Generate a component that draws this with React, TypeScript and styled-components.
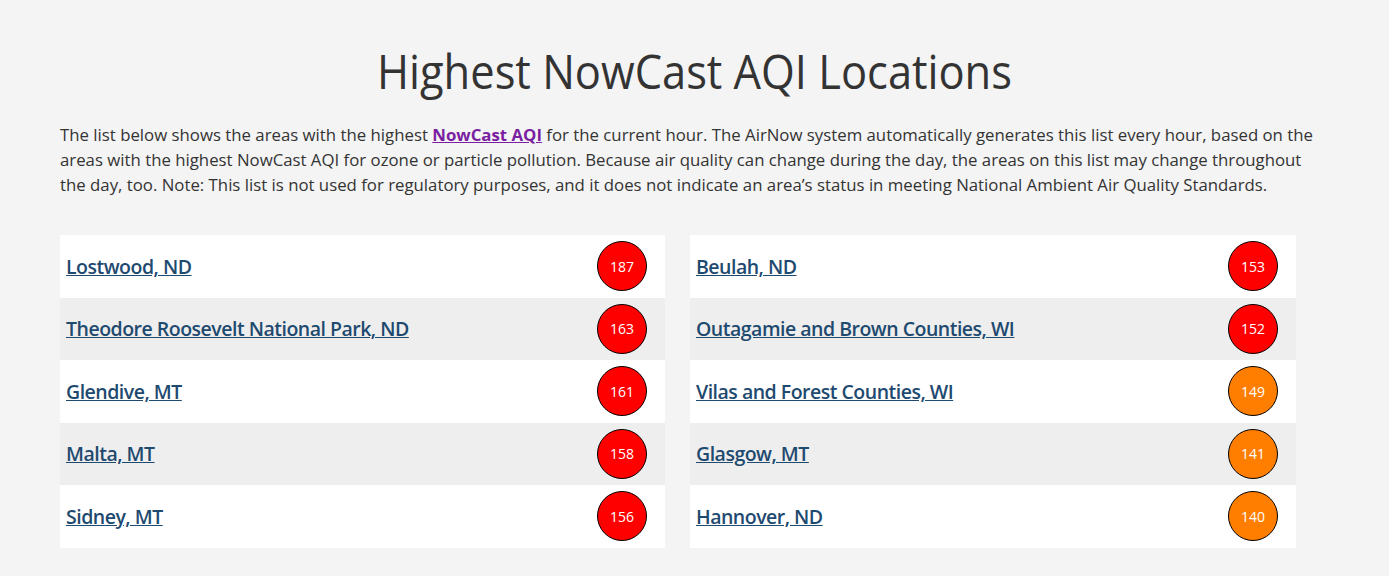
import React from 'react';
import styled, { createGlobalStyle } from 'styled-components';

const GlobalStyle = createGlobalStyle`
    html, body {
        margin: 0;
        padding: 0;
        background: #f4f4f4;
    }
    body {
        font-family: "Open Sans", "Liberation Sans", sans-serif;
        color: #333;
    }
`

const Page = styled.div`
    padding: 0 60px 29px;
`

const Title = styled.h1`
    margin: 0;
    padding-top: 42px;
    font-size: 48px;
    font-weight: 400;
    line-height: 58px;
    text-align: center;
    color: #333;
    transform: scaleX(0.905);
`

const Intro = styled.p`
    margin: 22px 0 38px;
    font-size: 16.8px;
    line-height: 25px;
    a {
        color: #7b1fa2;
        font-weight: 700;
    }
`

const Columns = styled.div`
    display: grid;
    grid-template-columns: 605px 606px;
    column-gap: 25px;
`

const List = styled.div`
    display: flex;
    flex-direction: column;
`

const Row = styled.div<{ $shade: boolean }>`
    height: 62.5px;
    display: flex;
    align-items: center;
    justify-content: space-between;
    padding: 0 18px 0 6px;
    background: ${p => (p.$shade ? '#eeeeee' : '#ffffff')};
    a {
        color: #1f4a70;
        font-size: 19.5px;
        font-weight: 600;
        letter-spacing: -0.5px;
    }
`

const Badge = styled.div<{ $color: string }>`
    width: 48px;
    height: 48px;
    border-radius: 50%;
    border: 1px solid #000;
    background: ${p => p.$color};
    color: #fff;
    font-size: 14px;
    display: flex;
    align-items: center;
    justify-content: center;
`

interface Location {
    name: string;
    aqi: number;
}

const left: Location[] = [
    { name: 'Lostwood, ND', aqi: 187 },
    { name: 'Theodore Roosevelt National Park, ND', aqi: 163 },
    { name: 'Glendive, MT', aqi: 161 },
    { name: 'Malta, MT', aqi: 158 },
    { name: 'Sidney, MT', aqi: 156 },
]

const right: Location[] = [
    { name: 'Beulah, ND', aqi: 153 },
    { name: 'Outagamie and Brown Counties, WI', aqi: 152 },
    { name: 'Vilas and Forest Counties, WI', aqi: 149 },
    { name: 'Glasgow, MT', aqi: 141 },
    { name: 'Hannover, ND', aqi: 140 },
]

function aqiColor(aqi: number) {
    if (aqi > 150) return '#ff0000';
    if (aqi > 100) return '#ff7e00';
    return '#ffff00';
}

function LocationList({ items }: { items: Location[] }) {
    return (
        <List>
            {items.map((loc, i) => (
                <Row key={loc.name} $shade={i % 2 === 1}>
                    <a href="#">{loc.name}</a>
                    <Badge $color={aqiColor(loc.aqi)}>{loc.aqi}</Badge>
                </Row>
            ))}
        </List>
    )
}

function App() {
    return (
        <Page>
            <GlobalStyle />
            <Title>Highest NowCast AQI Locations</Title>
            <Intro>
                The list below shows the areas with the highest <a href="#">NowCast AQI</a> for the current hour.
                The AirNow system automatically generates this list every hour, based on the areas with the highest
                NowCast AQI for ozone or particle pollution. Because air quality can change during the day, the areas
                on this list may change throughout the day, too. Note: This list is not used for regulatory purposes,
                and it does not indicate an area’s status in meeting National Ambient Air Quality Standards.
            </Intro>
            <Columns>
                <LocationList items={left} />
                <LocationList items={right} />
            </Columns>
        </Page>
    )
}

export default App;
